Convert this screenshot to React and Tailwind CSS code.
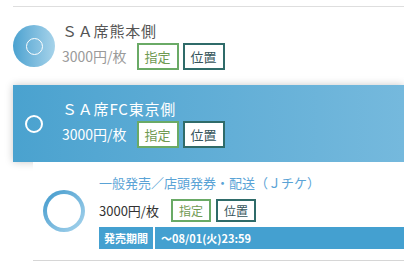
const jp = { fontFamily: '"Noto Sans CJK JP", "Noto Sans", sans-serif' };

function SeatButtons({ small }) {
    const size = small ? "h-[23px] px-[6px] text-[12px]" : "h-[27px] px-[6px] text-[13px]";
    return (
        <div className={"flex items-center " + (small ? "gap-[5px]" : "gap-[4px]")}>
            <span className={"flex items-center bg-white border-2 border-[#6aaa66] text-[#6f9a52] leading-none " + size}>指定</span>
            <span className={"flex items-center bg-white border-2 border-[#2f6b69] text-[#35545a] leading-none " + size}>位置</span>
        </div>
    );
}

export default function App() {
    return (
        <div className="w-[404px] h-[269px] bg-white overflow-hidden" style={jp}>
            <div className="pl-[13px] pt-[6px]">
                {/* 通常の席 */}
                <div className="border-t border-[#dedede] h-[79px] flex items-center">
                    <div className="w-[42px] h-[42px] rounded-full bg-gradient-to-r from-[#4aa2d0] to-[#a6d3ea] flex items-center justify-center">
                        <div className="w-[17px] h-[17px] rounded-full border-[1.5px] border-white" />
                    </div>
                    <div className="ml-[7px] -mt-[1px]">
                        <p className="text-[15px] leading-[20px] text-[#555] tracking-[0.8px]">ＳＡ席熊本側</p>
                        <div className="flex items-center gap-[10px] mt-[2px]">
                            <span className="text-[14px] text-[#9a9a9a]">3000円/枚</span>
                            <SeatButtons />
                        </div>
                    </div>
                </div>

                {/* 選択中 */}
                <div className="relative z-10 h-[77px] flex items-center bg-gradient-to-r from-[#4aa2cf] to-[#75b9dd] shadow-[0_0_8px_rgba(0,0,0,0.22)]">
                    <div className="w-[42px] flex items-center justify-center">
                        <div className="w-[18px] h-[18px] rounded-full border-2 border-white" />
                    </div>
                    <div className="ml-[7px] mt-[-1px]">
                        <p className="text-[15px] leading-[20px] text-white tracking-[0.8px]">ＳＡ席FC東京側</p>
                        <div className="flex items-center gap-[10px] mt-[2px]">
                            <span className="text-[14px] text-white">3000円/枚</span>
                            <SeatButtons />
                        </div>
                    </div>
                </div>

                {/* 販売区分 */}
                <div className="relative z-20 ml-[20px] bg-white border-b border-[#d6d6d6] flex items-center">
                    <div className="ml-[10px] w-[42px] h-[42px] rounded-full bg-gradient-to-br from-[#3b98cb] to-[#a9d6ee] p-[4px]">
                        <div className="w-full h-full rounded-full bg-white" />
                    </div>
                    <div className="ml-[14px] flex-1 pt-[12px] pb-[11px]">
                        <p className="text-[13px] leading-[18px] text-[#5aa3d6]">一般発売／店頭発券・配送（Ｊチケ）</p>
                        <div className="flex items-center gap-[12px] mt-[7px]">
                            <span className="text-[13px] text-[#333]">3000円/枚</span>
                            <SeatButtons small />
                        </div>
                        <div className="flex mt-[5px] h-[22px] text-[11px] font-bold text-white">
                            <span className="w-[54px] flex items-center justify-center bg-[#44a0d0]">発売期間</span>
                            <span className="flex-1 ml-[2px] flex items-center pl-[6px] bg-[#44a0d0]">〜08/01(火)23:59</span>
                        </div>
                    </div>
                </div>
            </div>
        </div>
    );
}
